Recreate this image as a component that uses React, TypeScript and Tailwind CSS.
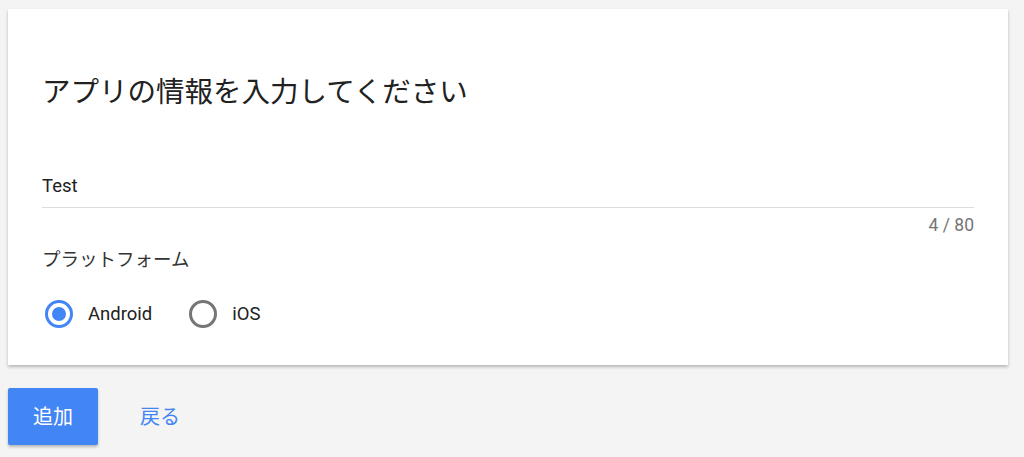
export default function App() {
    const jp = 'font-["Roboto","Noto_Sans_CJK_JP",sans-serif]';

    return (
        <div className={`min-h-screen bg-[#f4f4f4] pt-[9px] pl-2 pr-4 ${jp}`}>
            <div className="h-[356px] bg-white px-[34px] pt-[66px] shadow-[0_2px_3px_rgba(0,0,0,0.25)]">
                <h1 className="text-[28.5px] leading-[36px] text-[#212121]">アプリの情報を入力してください</h1>

                <div className="mt-[62px] border-b border-[#dcdcdc] pb-[8px]">
                    <div className="text-[18.5px] leading-[26px] text-[#212121]">Test</div>
                </div>
                <div className="mt-[6px] text-right text-[17.5px] leading-[22px] text-[#757575]">4 / 80</div>

                <div className="mt-[11px] text-[18.5px] leading-[26px] text-[#333]">プラットフォーム</div>

                <div className="mt-[27px] flex items-center pl-[3px]">
                    <div className="flex items-center">
                        <span className="flex h-[28px] w-[28px] items-center justify-center rounded-full border-[3px] border-[#4285f4]">
                            <span className="h-[14px] w-[14px] rounded-full bg-[#4285f4]" />
                        </span>
                        <span className="ml-[15px] text-[18.5px] leading-[26px] text-[#212121]">Android</span>
                    </div>
                    <div className="ml-[37px] flex items-center">
                        <span className="h-[28px] w-[28px] rounded-full border-[3px] border-[#757575]" />
                        <span className="ml-[15px] text-[18.5px] leading-[26px] text-[#212121]">iOS</span>
                    </div>
                </div>
            </div>

            <div className="mt-[23px] flex items-center">
                <button className="h-[57px] w-[90px] rounded-[2px] bg-[#4285f4] text-[20px] text-white shadow-[0_2px_3px_rgba(0,0,0,0.25)]">
                    追加
                </button>
                <button className="ml-[42px] text-[20px] text-[#4285f4]">戻る</button>
            </div>
        </div>
    );
}
